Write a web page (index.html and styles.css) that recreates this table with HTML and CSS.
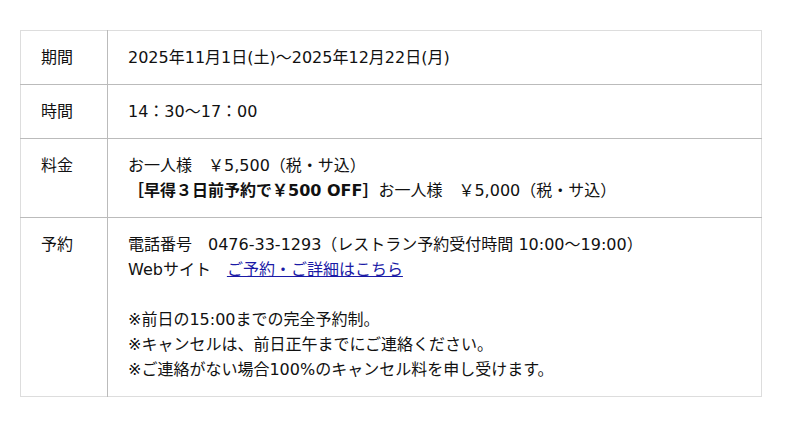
FILE: index.html
```html
<!DOCTYPE html>
<html lang="ja">
<head>
<meta charset="utf-8">
<link rel="stylesheet" href="styles.css">
</head>
<body>
<table class="info">
  <tr>
    <th>期間</th>
    <td>2025年11月1日(土)～2025年12月22日(月)</td>
  </tr>
  <tr>
    <th>時間</th>
    <td>14：30～17：00</td>
  </tr>
  <tr>
    <th>料金</th>
    <td>お一人様　￥5,500（税・サ込）<br><strong>［早得３日前予約で￥500 OFF］</strong>お一人様　￥5,000（税・サ込）</td>
  </tr>
  <tr>
    <th>予約</th>
    <td>電話番号　0476-33-1293（レストラン予約受付時間 10:00～19:00）<br>Webサイト　<a href="#">ご予約・ご詳細はこちら</a><br><br>※前日の15:00までの完全予約制。<br>※キャンセルは、前日正午までにご連絡ください。<br>※ご連絡がない場合100%のキャンセル料を申し受けます。</td>
  </tr>
</table>
</body>
</html>
```

FILE: styles.css
```css
html, body {
  margin: 0;
  padding: 0;
  background: #fff;
}
body {
  padding: 30px 38px 0 20px;
  font-family: "DejaVu Sans", "Noto Sans CJK JP", sans-serif;
  font-size: 16px;
  line-height: 25px;
  color: #111;
}
.info {
  width: 742px;
  border-collapse: collapse;
  border: 1px solid #dddddd;
}
.info th,
.info td {
  text-align: left;
  vertical-align: top;
  padding: 14px 20px;
  font-weight: normal;
  border-top: 1px solid #bbbbbb;
}
.info tr:first-child th,
.info tr:first-child td {
  border-top: 1px solid #dddddd;
}
.info th {
  width: 46px;
  border-right: 1px solid #bbbbbb;
}
.info strong {
  font-weight: bold;
}
.info a {
  color: #1a1aa6;
  text-decoration: underline;
}
```
